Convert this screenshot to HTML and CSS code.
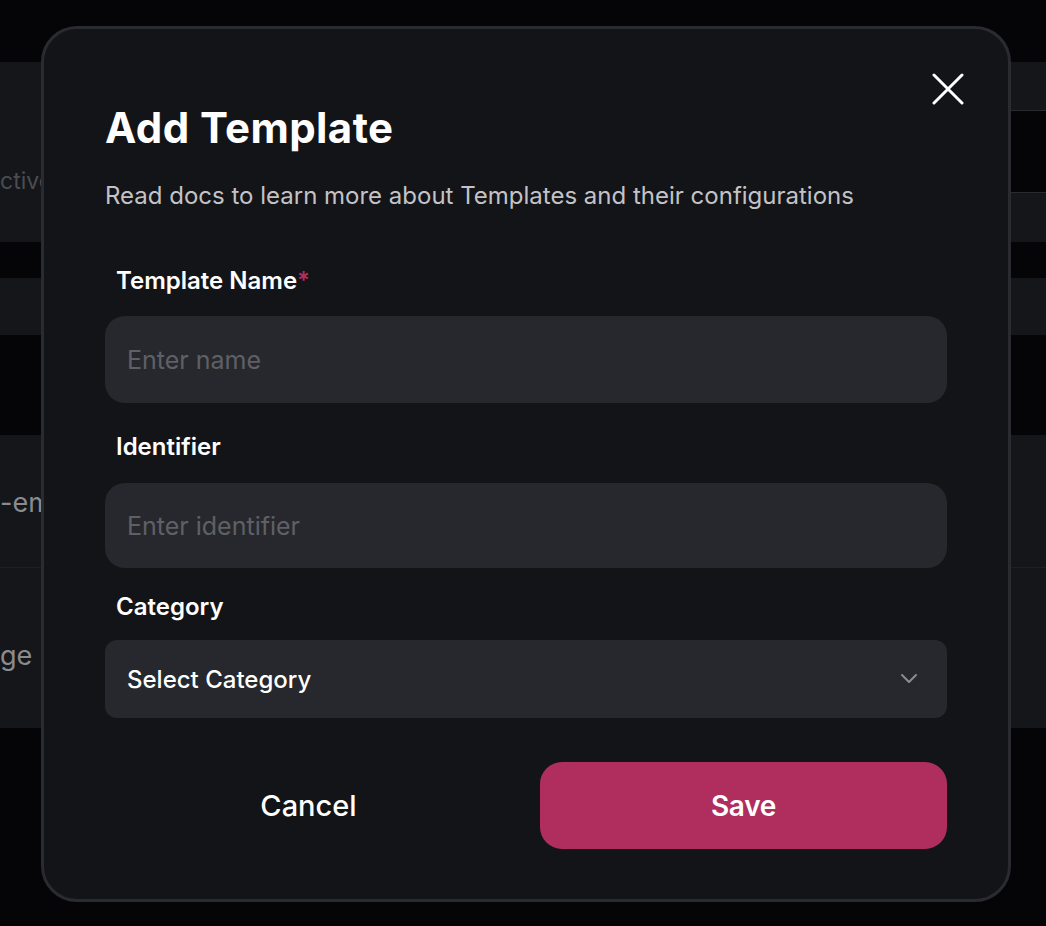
FILE: index.html
```html
<!DOCTYPE html>
<html lang="en">
<head>
<meta charset="utf-8">
<title>Add Template</title>
<link rel="stylesheet" href="styles.css">
</head>
<body>
<div class="page">
  <div class="bg-gap bg-gap-top"></div>
  <div class="band band-a">
    <div class="cell-left"><span class="bg-text dim">ctive</span></div>
    <div class="cell-mid"></div>
    <div class="cell-right">
      <div class="sub sub-1"></div>
      <div class="sub sub-2"></div>
      <div class="sub sub-3"></div>
    </div>
  </div>
  <div class="bg-gap bg-gap-1"></div>
  <div class="band band-b"></div>
  <div class="bg-gap bg-gap-2"></div>
  <div class="band band-c">
    <div class="row row-1"><span class="bg-text">-email</span></div>
    <div class="row row-2"><span class="bg-text">ge</span></div>
  </div>
</div>

<div class="overlay">
  <div class="modal">
    <button class="close" type="button" aria-label="Close">
      <svg width="32" height="32" viewBox="0 0 32 32"><path d="M2 2 L30 30 M30 2 L2 30" stroke="#ffffff" stroke-width="3" stroke-linecap="round" fill="none"/></svg>
    </button>
    <h1 class="title">Add Template</h1>
    <p class="subtitle">Read docs to learn more about Templates and their configurations</p>
    <div class="form">
      <div class="field field-name">
        <label class="label">Template Name<span class="req">*</span></label>
        <div class="input"><span class="placeholder">Enter name</span></div>
      </div>
      <div class="field field-id">
        <label class="label">Identifier</label>
        <div class="input input-2"><span class="placeholder">Enter identifier</span></div>
      </div>
      <div class="field field-cat">
        <label class="label">Category</label>
        <div class="select">
          <span class="select-value">Select Category</span>
          <svg class="chev" width="18" height="12" viewBox="0 0 18 12"><path d="M2 2 L9 9 L16 2" stroke="#8b8c91" stroke-width="2" stroke-linecap="round" stroke-linejoin="round" fill="none"/></svg>
        </div>
      </div>
    </div>
    <div class="actions">
      <button class="btn btn-cancel" type="button">Cancel</button>
      <button class="btn btn-save" type="button">Save</button>
    </div>
  </div>
</div>
</body>
</html>
```

FILE: styles.css
```css
* { box-sizing: border-box; }
html, body { margin: 0; padding: 0; }
body {
  background: #050507;
  font-family: Inter, "Liberation Sans", sans-serif;
  overflow: hidden;
  width: 1046px;
  height: 926px;
}

/* background page */
.page { display: flex; flex-direction: column; height: 926px; }
.bg-gap-top { height: 62px; }
.band-a { height: 180px; display: grid; grid-template-columns: 60px 1fr 35px; }
.cell-left {
  background: #15161a;
  display: flex;
  overflow: hidden;
  padding-top: 104px;
}
.cell-right { display: flex; flex-direction: column; }
.sub-1 { height: 49px; background: #15161a; border-bottom: 1px solid #2a2b2f; }
.sub-2 { height: 82px; border-bottom: 1px solid #2a2b2f; }
.sub-3 { height: 49px; background: #15161a; }
.bg-gap-1 { height: 36px; }
.band-b { height: 57px; background: #15161a; }
.bg-gap-2 { height: 100px; }
.band-c { height: 293px; background: #15161a; display: flex; flex-direction: column; }
.row { display: flex; overflow: hidden; }
.row-1 { height: 133px; border-bottom: 1px solid #1f2024; padding-top: 51px; }
.row-2 { height: 160px; padding-top: 71px; }
.bg-text { font-size: 27px; line-height: 34px; color: #8a8b8f; white-space: nowrap; }
.bg-text.dim { color: #4b4c50; font-size: 23px; line-height: 30px; }

/* modal */
.overlay {
  position: fixed;
  top: 0; left: 0; right: 0; bottom: 0;
  padding: 26px 35px 0 41px;
}
.modal {
  position: relative;
  width: 970px;
  background: #131417;
  border: 3px solid #2a2b30;
  border-radius: 36px;
  padding: 75px 61px 50px 61px;
  display: flex;
  flex-direction: column;
}
.close {
  position: absolute;
  left: 888px;
  top: 44px;
  width: 32px;
  height: 32px;
  padding: 0;
  border: 0;
  background: none;
  display: block;
}
.close svg { display: block; }
.title {
  margin: 0;
  font-size: 42px;
  line-height: 48px;
  font-weight: 700;
  letter-spacing: 0.4px;
  color: #ffffff;
}
.subtitle {
  margin: 29px 0 0 0;
  font-size: 24px;
  line-height: 30px;
  color: #c3c3c7;
}
.form { margin-top: 55px; display: flex; flex-direction: column; }
.field { display: flex; flex-direction: column; gap: 20px; }
.field-id { margin-top: 29px; gap: 21px; }
.field-cat { margin-top: 24px; gap: 18px; }
.label {
  padding-left: 11px;
  font-size: 24px;
  line-height: 30px;
  font-weight: 600;
  color: #ffffff;
}
.req { color: #b02e5e; }
.input {
  height: 87px;
  background: #27282d;
  border-radius: 20px;
  padding: 0 22px;
  display: flex;
  align-items: center;
}
.input-2 { height: 85px; }
.placeholder { font-size: 25px; color: #5f6065; }
.select {
  height: 78px;
  background: #27282d;
  border-radius: 12px;
  padding: 0 29px 0 22px;
  display: flex;
  align-items: center;
  justify-content: space-between;
}
.select-value { font-size: 24px; font-weight: 500; color: #ffffff; }
.chev { display: block; }
.actions {
  margin-top: 44px;
  display: grid;
  grid-template-columns: 1fr 1fr;
  gap: 28px;
}
.btn {
  height: 87px;
  border: 0;
  border-radius: 22px;
  font-family: Inter, "Liberation Sans", sans-serif;
  font-size: 28px;
  font-weight: 600;
  letter-spacing: -0.3px;
  color: #ffffff;
  background: transparent;
}
.btn-save { background: #b02e5e; }
.btn-cancel { font-weight: 500; font-size: 29px; letter-spacing: 0; }
```
